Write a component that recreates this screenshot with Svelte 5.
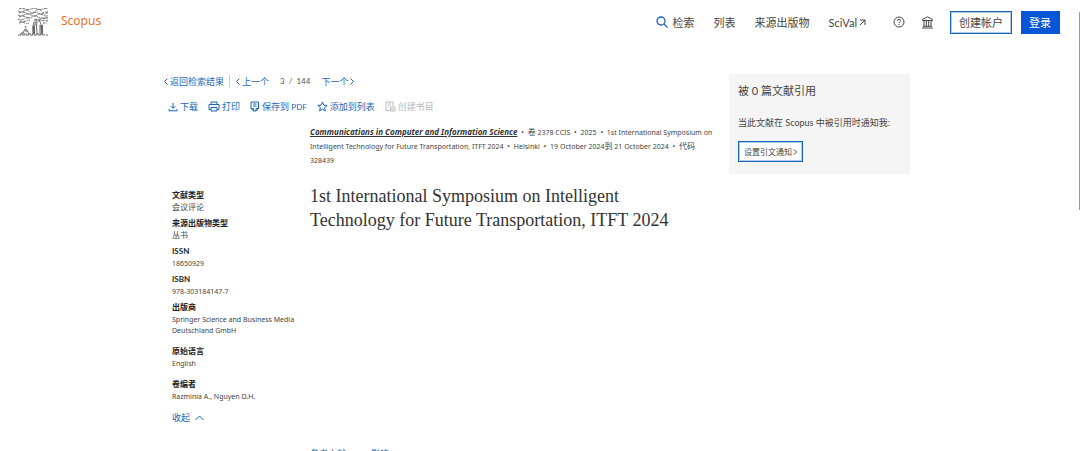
<script lang="ts">
	type Field = { label: string; value: string; latin?: boolean; spaced?: boolean };

	const fields: Field[] = [
		{ label: '文献类型', value: '会议评论' },
		{ label: '来源出版物类型', value: '丛书' },
		{ label: 'ISSN', value: '18650929', latin: true },
		{ label: 'ISBN', value: '978-303184147-7', latin: true },
		{
			label: '出版商',
			value: 'Springer Science and Business Media Deutschland GmbH',
			latin: true,
			spaced: true
		},
		{ label: '原始语言', value: 'English', latin: true, spaced: true },
		{ label: '卷编者', value: 'Razminia A., Nguyen D.H.', latin: true, spaced: true }
	];

	// canopy of the tree logo, one dashed stroke per row
	const leaves = [
		'M1 1q3-1 6 0t6 0 6 0 6 0 5 0',
		'M0 3q3 2 6 0t6 1 6-1 6 1 6-1',
		'M1 5q4-2 7 0t6 0 6 0 5 0 5 0',
		'M0 7q3 2 6 0t7 0 6 0 6 0 5 0',
		'M1 9q4-2 7 0t6 0 6 0 10 0',
		'M0 11q3 2 6 0t6-1M17 11q3 1 6 0t7 0',
		'M2 13q3 1 6 0t4-1M20 13q3-1 10 0',
		'M1 15q3-1 6 0t4 0M25 15h4'
	];
</script>

<div class="page">
	<header>
		<a class="brand" href="#home" aria-label="Scopus">
			<svg class="tree" width="30" height="28" viewBox="0 0 30 28">
				{#each leaves as d}
					<path {d} stroke-dasharray="2 .6 1 .5" />
				{/each}
				<path d="M17 11q1 5-1 9v6M19 12q-1 7 0 14M21 12q3 4 2 8l1 6M16 14q-2 4-1 12M22 17v9" />
				<path class="figures" d="M16 18v8M24 17v9" />
				<path d="M5 25l2-4 2 1 2 4M3 25h3M7 20l1-2M7 23h2" />
				<path d="M0 27h30M2 26h24" stroke-dasharray="3 1" />
			</svg>
			<span>Scopus</span>
		</a>
		<nav class="menu">
			<a class="search" href="#search">
				<svg width="12" height="12" viewBox="0 0 12 12">
					<circle cx="5" cy="5" r="4" />
					<path d="M8 8l3.5 3.5" />
				</svg>
				检索
			</a>
			<a href="#lists">列表</a>
			<a href="#sources">来源出版物</a>
			<a class="scival" href="#scival">
				SciVal
				<svg width="7" height="7" viewBox="0 0 7 7"><path d="M1 1h5v5M6 1L1 6" /></svg>
			</a>
		</nav>
		<div class="account">
			<button class="icon" aria-label="帮助">
				<svg width="12" height="12" viewBox="0 0 12 12">
					<circle cx="6" cy="6" r="5" />
					<path d="M4.5 4.9q0-1.6 1.5-1.6t1.5 1.3q0 .8-.8 1.2-.7.4-.7 1.2M6 8v1" />
				</svg>
			</button>
			<button class="icon" aria-label="机构">
				<svg width="13" height="13" viewBox="0 0 13 13">
					<path d="M1.5 4.5v-1l5-2.7 5 2.7v1zM3 5v5M5.3 5v5M7.7 5v5M10 5v5M2 10.3h9M1 12h11" />
				</svg>
			</button>
			<button class="create">创建帐户</button>
			<button class="login">登录</button>
		</div>
	</header>

	<div class="layout">
		<div class="document">
			<nav class="pager">
				<a href="#results">
					<svg width="4" height="7" viewBox="0 0 4 7"><path d="M3.5.5l-3 3 3 3" /></svg>
					返回检索结果
				</a>
				<a class="previous" href="#previous">
					<svg width="4" height="7" viewBox="0 0 4 7"><path d="M3.5.5l-3 3 3 3" /></svg>
					上一个
				</a>
				<span>3 &nbsp;/ &nbsp;144</span>
				<a href="#next">
					下一个
					<svg width="4" height="7" viewBox="0 0 4 7"><path d="M.5.5l3 3-3 3" /></svg>
				</a>
			</nav>

			<div class="toolbar">
				<button>
					<svg width="10" height="10" viewBox="0 0 10 10">
						<path d="M5 1v5M2.8 4.2L5 6.4l2.2-2.2M1 7v1.8h8V7" />
					</svg>
					下载
				</button>
				<button>
					<svg width="12" height="11" viewBox="0 0 12 11">
						<path d="M3 3.5V1h6v2.5M3 8.5H1v-5h10v5H9M3 6.5h6V10H3z" />
					</svg>
					打印
				</button>
				<button>
					<svg width="10" height="11" viewBox="0 0 10 11">
						<path d="M6 10H3.5L1 7.5V1h7.5v6.5L6 10V7.5h2.5M3 3h3.5M3 5h3.5M1 7.5h2.5V10" />
					</svg>
					<span>保存到 <small>PDF</small></span>
				</button>
				<button>
					<svg width="11" height="11" viewBox="0 0 11 11">
						<path d="M5.5.9l1.3 3.2 3.4.3-2.6 2.2.8 3.3-2.9-1.8-2.9 1.8.8-3.3L.8 4.4l3.4-.3z" />
					</svg>
					添加到列表
				</button>
				<button disabled>
					<svg width="11" height="11" viewBox="0 0 11 11">
						<path d="M4.5 9.5H1V1h7v4M3 3h3M3 5h2M5.5 6H10v4H5.5zM7 7v2M8.5 8v1" />
					</svg>
					创建书目
				</button>
			</div>

			<div class="columns">
				<aside>
					<dl>
						{#each fields as field (field.label)}
							<div class:spaced={field.spaced}>
								<dt>{field.label}</dt>
								<dd class:latin={field.latin}>{field.value}</dd>
							</div>
						{/each}
					</dl>
					<button class="collapse">
						收起
						<svg width="9" height="6" viewBox="0 0 9 6"><path d="M.5 5l4-4 4 4" /></svg>
					</button>
				</aside>

				<main>
					<p class="source latin">
						<a href="#source">Communications in Computer and Information Science</a>
						<i>•</i> <span>卷</span> 2378 CCIS <i>•</i> 2025 <i>•</i> 1st International Symposium on
						Intelligent Technology for Future Transportation, ITFT 2024 <i>•</i> Helsinki <i>•</i> 19
						October 2024<span>到</span> 21 October 2024 <i>•</i> <span>代码</span> 328439
					</p>
					<h1>1st International Symposium on Intelligent Technology for Future Transportation, ITFT 2024</h1>
					<nav class="tabs">
						<a href="#references">参考文献</a>
						<a href="#impact">影响</a>
					</nav>
				</main>
			</div>
		</div>

		<section class="cited">
			<h2>被 0 篇文献引用</h2>
			<p>当此文献在 Scopus 中被引用时通知我:</p>
			<button>
				设置引文通知
				<svg width="4" height="6" viewBox="0 0 4 6"><path d="M1 .5L3.5 3 1 5.5" /></svg>
			</button>
		</section>
	</div>
	<div class="scrollbar"></div>
</div>

<style>
	:global(body) {
		margin: 0;
		background: #fff;
	}

	.page {
		position: relative;
		height: 100vh;
		overflow: hidden;
		color: #444;
		font-family: Lato, 'Noto Sans CJK SC', sans-serif;
		font-size: 8px;
	}

	a {
		color: inherit;
		text-decoration: none;
	}

	button {
		display: flex;
		align-items: center;
		padding: 0;
		border: 0;
		background: none;
		color: inherit;
		font: inherit;
		cursor: pointer;
	}

	svg {
		flex: none;
		fill: none;
		stroke: currentColor;
	}

	.latin {
		font-family: 'Noto Sans', 'Noto Sans CJK SC', sans-serif;
		font-size: 7px;
	}

	header {
		display: flex;
		align-items: center;
		height: 44px;
		padding: 0 20px 0 18px;
		font-size: 11px;
	}

	.brand {
		display: flex;
		align-items: center;
		gap: 13px;
		margin-right: auto;
		color: #e9711c;
		font-family: 'Noto Sans', sans-serif;
		font-size: 12px;
		line-height: 16px;
	}

	.brand span {
		margin-bottom: 2px;
	}

	.tree {
		color: #666;
	}

	.figures {
		stroke-width: 2;
	}

	.menu,
	.menu a,
	.account {
		display: flex;
		align-items: center;
	}

	.menu {
		gap: 19px;
	}

	.menu .search {
		gap: 4px;
	}

	.search svg {
		color: #1f66c1;
		stroke-width: 1.3;
	}

	.menu .scival {
		gap: 2px;
	}

	.account {
		margin-left: 27px;
	}

	.icon {
		margin-right: 16px;
	}

	.create,
	.login {
		box-sizing: border-box;
		height: 23px;
		padding: 0 8px;
	}

	.create {
		border: 1px solid #1765b8;
		outline: 1px solid #1765b855;
		outline-offset: -2px;
		margin-right: 9px;
	}

	.login {
		padding: 0 9px 0 8px;
		background: #0656d6;
		color: #fff;
	}

	.layout {
		display: grid;
		grid-template-columns: 1fr 181px;
		align-items: start;
		gap: 12px;
		padding: 30px 170px 0 164px;
	}

	.pager,
	.pager a,
	.toolbar {
		display: flex;
		align-items: center;
	}

	.pager {
		height: 14px;
		color: #555;
		font-size: 9px;
	}

	.pager a {
		gap: 2px;
		color: #1a66b8;
	}

	.pager .previous {
		margin-left: 5px;
		padding-left: 6px;
		border-left: 1px solid #ccc;
	}

	.pager span {
		margin: 0 11px;
		font-size: 8px;
	}

	.toolbar {
		gap: 10px;
		height: 15px;
		padding: 11px 4px 0;
		color: #1a66b8;
		font-size: 9px;
	}

	.toolbar button {
		gap: 2px;
		white-space: nowrap;
	}

	.toolbar small {
		font-size: 8px;
	}

	.toolbar button:disabled {
		color: #bbb;
		cursor: default;
	}

	.columns {
		display: grid;
		grid-template-columns: 130px 1fr;
		gap: 8px;
		padding: 12px 0 0 8px;
	}

	aside {
		padding-top: 62px;
	}

	dl {
		margin: 0;
	}

	dl div {
		margin-bottom: 3px;
	}

	dl .spaced {
		margin-bottom: 8px;
	}

	dt {
		color: #222;
		font-weight: bold;
		line-height: 14px;
	}

	dd {
		margin: 0;
		line-height: 11px;
	}

	.collapse {
		gap: 5px;
		color: #1a66b8;
		font-size: 9px;
		line-height: 16px;
	}

	.source {
		margin: 0;
		line-height: 14px;
	}

	.source a {
		color: #333;
		font-size: 8px;
		font-style: italic;
		font-weight: bold;
		line-height: 8px;
		text-decoration: underline;
	}

	.source span {
		font-size: 8px;
		line-height: 8px;
	}

	.source i {
		margin: 0 2px;
		font-style: normal;
	}

	h1 {
		margin: 16px 0 0;
		padding-right: 36px;
		color: #333;
		font-family: 'Liberation Serif', serif;
		font-size: 18px;
		font-weight: normal;
		line-height: 24px;
	}

	.tabs {
		display: flex;
		gap: 25px;
		margin-top: 215px;
		color: #1a66b8;
		font-size: 9px;
		line-height: 14px;
	}

	.cited {
		padding: 9px 9px 12px;
		background: #f5f5f5;
	}

	.cited h2 {
		margin: 0;
		font-size: 11px;
		font-weight: normal;
		line-height: 16px;
	}

	.cited p {
		margin: 16px 0 10px;
		font-size: 9px;
		line-height: 16px;
	}

	.cited button {
		gap: 1px;
		height: 21px;
		padding: 0 5px;
		border: 1px solid #1765b8;
		outline: 1px solid #1765b855;
		outline-offset: -2px;
		background: #fff;
		box-sizing: border-box;
	}

	.scrollbar {
		position: absolute;
		top: 12px;
		right: 0;
		width: 1px;
		height: 198px;
		background: #999;
	}
</style>
